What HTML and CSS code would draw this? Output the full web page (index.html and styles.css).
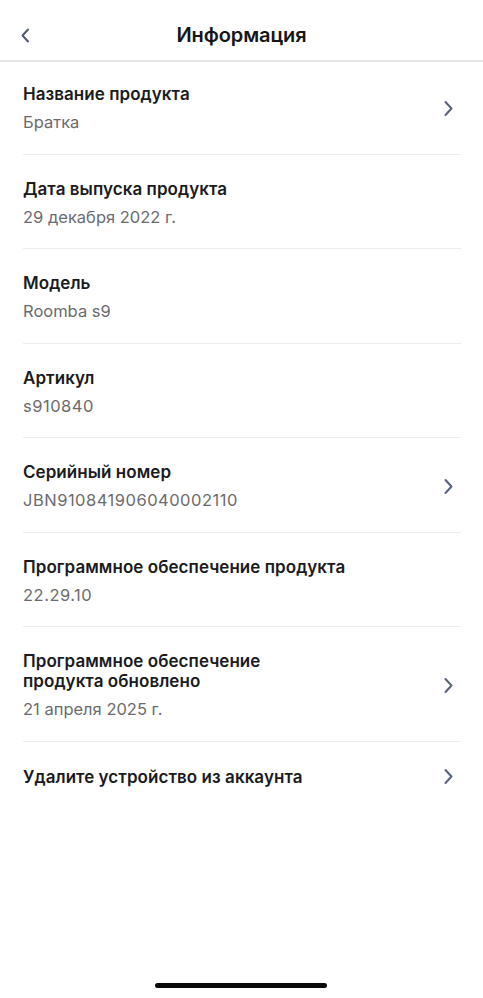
FILE: index.html
```html
<!DOCTYPE html>
<html lang="ru">
<head>
<meta charset="utf-8">
<title>Информация</title>
<link rel="stylesheet" href="styles.css">
</head>
<body>
<div class="screen">
  <header class="topbar">
    <button class="back" aria-label="Назад">
      <svg width="10" height="15" viewBox="0 0 10 15"><path d="M8 1.5 L2.5 7.5 L8 13.5" fill="none" stroke="#4d5b70" stroke-width="2" stroke-linecap="round" stroke-linejoin="round"/></svg>
    </button>
    <h1 class="title">Информация</h1>
  </header>
  <main class="list">
    <div class="row first">
      <div class="text">
        <div class="label">Название продукта</div>
        <div class="value">Братка</div>
      </div>
      <svg class="chev" width="11" height="17" viewBox="0 0 11 17"><path d="M2.5 2 L8.5 8.5 L2.5 15" fill="none" stroke="#56637a" stroke-width="2" stroke-linecap="round" stroke-linejoin="round"/></svg>
    </div>
    <div class="row">
      <div class="text">
        <div class="label">Дата выпуска продукта</div>
        <div class="value">29 декабря 2022 г.</div>
      </div>
    </div>
    <div class="row">
      <div class="text">
        <div class="label">Модель</div>
        <div class="value">Roomba s9</div>
      </div>
    </div>
    <div class="row">
      <div class="text">
        <div class="label">Артикул</div>
        <div class="value num">s910840</div>
      </div>
    </div>
    <div class="row">
      <div class="text">
        <div class="label">Серийный номер</div>
        <div class="value num">JBN910841906040002110</div>
      </div>
      <svg class="chev" width="11" height="17" viewBox="0 0 11 17"><path d="M2.5 2 L8.5 8.5 L2.5 15" fill="none" stroke="#56637a" stroke-width="2" stroke-linecap="round" stroke-linejoin="round"/></svg>
    </div>
    <div class="row">
      <div class="text">
        <div class="label">Программное обеспечение продукта</div>
        <div class="value num">22.29.10</div>
      </div>
    </div>
    <div class="row">
      <div class="text">
        <div class="label narrow">Программное обеспечение продукта обновлено</div>
        <div class="value">21 апреля 2025 г.</div>
      </div>
      <svg class="chev" width="11" height="17" viewBox="0 0 11 17"><path d="M2.5 2 L8.5 8.5 L2.5 15" fill="none" stroke="#56637a" stroke-width="2" stroke-linecap="round" stroke-linejoin="round"/></svg>
    </div>
    <div class="row last">
      <div class="text">
        <div class="label">Удалите устройство из аккаунта</div>
      </div>
      <svg class="chev" width="11" height="17" viewBox="0 0 11 17"><path d="M2.5 2 L8.5 8.5 L2.5 15" fill="none" stroke="#56637a" stroke-width="2" stroke-linecap="round" stroke-linejoin="round"/></svg>
    </div>
  </main>
  <div class="home"></div>
</div>
</body>
</html>
```
FILE: styles.css
```css
* { box-sizing: border-box; }
html, body {
  margin: 0;
  padding: 0;
  background: #ffffff;
}
body {
  font-family: Inter, "Noto Sans", "Liberation Sans", sans-serif;
  color: #1b1b1d;
  -webkit-font-smoothing: antialiased;
}
.screen {
  width: 483px;
  height: 998px;
  display: flex;
  flex-direction: column;
  position: relative;
}
.topbar {
  height: 62px;
  display: flex;
  align-items: center;
  justify-content: center;
  position: relative;
  border-bottom: 2px solid #e6e6e6;
  padding-top: 10px;
}
.back {
  position: absolute;
  left: 18px;
  top: 27px;
  border: 0;
  background: none;
  padding: 0;
  width: 14px;
  height: 16px;
  display: flex;
  align-items: center;
  justify-content: center;
}
.title {
  margin: 0;
  font-size: 20px;
  font-weight: 600;
  letter-spacing: -0.1px;
  line-height: 24px;
  color: #161618;
}
.list {
  padding: 0 22px 0 23px;
}
.row {
  display: flex;
  align-items: center;
  justify-content: space-between;
  padding: 24px 0 21.5px;
  border-bottom: 1px solid #ececec;
}
.row.first {
  padding-top: 22px;
}
.row.last {
  border-bottom: 0;
  padding-top: 25px;
}
.text {
  display: flex;
  flex-direction: column;
  gap: 8px;
}
.label {
  font-size: 17px;
  font-weight: 600;
  line-height: 20px;
  letter-spacing: 0.05px;
  color: #1b1b1d;
}
.label.narrow {
  max-width: 280px;
}
.value {
  font-size: 16.5px;
  font-weight: 400;
  line-height: 20px;
  color: #6b6b6e;
}
.value.num {
  letter-spacing: 0.5px;
}
.chev {
  flex: none;
  margin-right: 7px;
}
.home {
  position: absolute;
  left: 155px;
  bottom: 10px;
  width: 172px;
  height: 5px;
  border-radius: 3px;
  background: #0a0a0a;
}
```
